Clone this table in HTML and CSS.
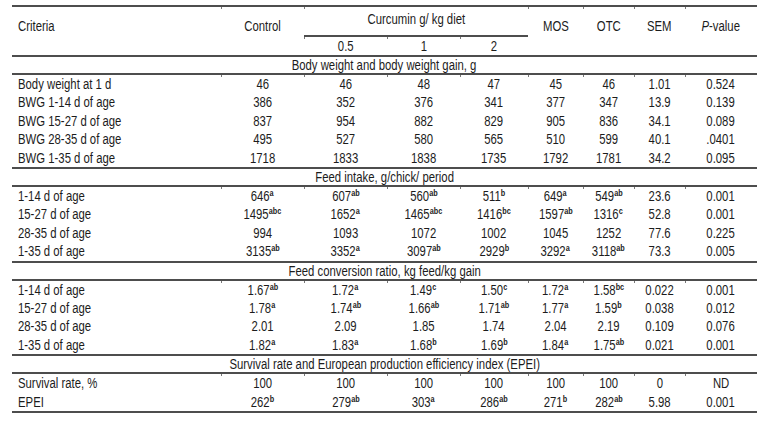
FILE: index.html
```html
<!DOCTYPE html>
<html lang="en">
<head>
<meta charset="utf-8">
<title>Table</title>
<link rel="stylesheet" href="styles.css">
</head>
<body>
<table class="tbl">
  <colgroup>
    <col class="c-crit"><col class="c-ctrl"><col class="c-05"><col class="c-1"><col class="c-2"><col class="c-mos"><col class="c-otc"><col class="c-sem"><col class="c-p">
  </colgroup>
  <thead>
    <tr class="h1">
      <th rowspan="2" class="hcell left"><span class="t">Criteria</span></th>
      <th rowspan="2" class="hcell"><span class="t">Control</span></th>
      <th colspan="3" class="curc"><span class="t">Curcumin g/ kg diet</span></th>
      <th rowspan="2" class="hcell"><span class="t">MOS</span></th>
      <th rowspan="2" class="hcell"><span class="t">OTC</span></th>
      <th rowspan="2" class="hcell"><span class="t">SEM</span></th>
      <th rowspan="2" class="hcell"><span class="t"><i>P</i>-value</span></th>
    </tr>
    <tr class="h2">
      <th><span class="t">0.5</span></th><th><span class="t">1</span></th><th><span class="t">2</span></th>
    </tr>
  </thead>
  <tbody>
    <tr class="sec"><td colspan="9"><span class="t">Body weight and body weight gain, g</span></td></tr>
    <tr class="first"><td class="left"><span class="t">Body weight at 1 d</span></td><td><span class="t">46</span></td><td><span class="t">46</span></td><td><span class="t">48</span></td><td><span class="t">47</span></td><td><span class="t">45</span></td><td><span class="t">46</span></td><td><span class="t">1.01</span></td><td><span class="t">0.524</span></td></tr>
    <tr><td class="left"><span class="t">BWG 1-14 d of age</span></td><td><span class="t">386</span></td><td><span class="t">352</span></td><td><span class="t">376</span></td><td><span class="t">341</span></td><td><span class="t">377</span></td><td><span class="t">347</span></td><td><span class="t">13.9</span></td><td><span class="t">0.139</span></td></tr>
    <tr><td class="left"><span class="t">BWG 15-27 d of age</span></td><td><span class="t">837</span></td><td><span class="t">954</span></td><td><span class="t">882</span></td><td><span class="t">829</span></td><td><span class="t">905</span></td><td><span class="t">836</span></td><td><span class="t">34.1</span></td><td><span class="t">0.089</span></td></tr>
    <tr><td class="left"><span class="t">BWG 28-35 d of age</span></td><td><span class="t">495</span></td><td><span class="t">527</span></td><td><span class="t">580</span></td><td><span class="t">565</span></td><td><span class="t">510</span></td><td><span class="t">599</span></td><td><span class="t">40.1</span></td><td><span class="t">.0401</span></td></tr>
    <tr class="last"><td class="left"><span class="t">BWG 1-35 d of age</span></td><td><span class="t">1718</span></td><td><span class="t">1833</span></td><td><span class="t">1838</span></td><td><span class="t">1735</span></td><td><span class="t">1792</span></td><td><span class="t">1781</span></td><td><span class="t">34.2</span></td><td><span class="t">0.095</span></td></tr>

    <tr class="sec"><td colspan="9"><span class="t">Feed intake, g/chick/ period</span></td></tr>
    <tr class="first"><td class="left"><span class="t">1-14 d of age</span></td><td><span class="t">646<sup>a</sup></span></td><td><span class="t">607<sup>ab</sup></span></td><td><span class="t">560<sup>ab</sup></span></td><td><span class="t">511<sup>b</sup></span></td><td><span class="t">649<sup>a</sup></span></td><td><span class="t">549<sup>ab</sup></span></td><td><span class="t">23.6</span></td><td><span class="t">0.001</span></td></tr>
    <tr><td class="left"><span class="t">15-27 d of age</span></td><td><span class="t">1495<sup>abc</sup></span></td><td><span class="t">1652<sup>a</sup></span></td><td><span class="t">1465<sup>abc</sup></span></td><td><span class="t">1416<sup>bc</sup></span></td><td><span class="t">1597<sup>ab</sup></span></td><td><span class="t">1316<sup>c</sup></span></td><td><span class="t">52.8</span></td><td><span class="t">0.001</span></td></tr>
    <tr><td class="left"><span class="t">28-35 d of age</span></td><td><span class="t">994</span></td><td><span class="t">1093</span></td><td><span class="t">1072</span></td><td><span class="t">1002</span></td><td><span class="t">1045</span></td><td><span class="t">1252</span></td><td><span class="t">77.6</span></td><td><span class="t">0.225</span></td></tr>
    <tr class="last"><td class="left"><span class="t">1-35 d of age</span></td><td><span class="t">3135<sup>ab</sup></span></td><td><span class="t">3352<sup>a</sup></span></td><td><span class="t">3097<sup>ab</sup></span></td><td><span class="t">2929<sup>b</sup></span></td><td><span class="t">3292<sup>a</sup></span></td><td><span class="t">3118<sup>ab</sup></span></td><td><span class="t">73.3</span></td><td><span class="t">0.005</span></td></tr>

    <tr class="sec"><td colspan="9"><span class="t">Feed conversion ratio, kg feed/kg gain</span></td></tr>
    <tr class="first"><td class="left"><span class="t">1-14 d of age</span></td><td><span class="t">1.67<sup>ab</sup></span></td><td><span class="t">1.72<sup>a</sup></span></td><td><span class="t">1.49<sup>c</sup></span></td><td><span class="t">1.50<sup>c</sup></span></td><td><span class="t">1.72<sup>a</sup></span></td><td><span class="t">1.58<sup>bc</sup></span></td><td><span class="t">0.022</span></td><td><span class="t">0.001</span></td></tr>
    <tr><td class="left"><span class="t">15-27 d of age</span></td><td><span class="t">1.78<sup>a</sup></span></td><td><span class="t">1.74<sup>ab</sup></span></td><td><span class="t">1.66<sup>ab</sup></span></td><td><span class="t">1.71<sup>ab</sup></span></td><td><span class="t">1.77<sup>a</sup></span></td><td><span class="t">1.59<sup>b</sup></span></td><td><span class="t">0.038</span></td><td><span class="t">0.012</span></td></tr>
    <tr><td class="left"><span class="t">28-35 d of age</span></td><td><span class="t">2.01</span></td><td><span class="t">2.09</span></td><td><span class="t">1.85</span></td><td><span class="t">1.74</span></td><td><span class="t">2.04</span></td><td><span class="t">2.19</span></td><td><span class="t">0.109</span></td><td><span class="t">0.076</span></td></tr>
    <tr class="last"><td class="left"><span class="t">1-35 d of age</span></td><td><span class="t">1.82<sup>a</sup></span></td><td><span class="t">1.83<sup>a</sup></span></td><td><span class="t">1.68<sup>b</sup></span></td><td><span class="t">1.69<sup>b</sup></span></td><td><span class="t">1.84<sup>a</sup></span></td><td><span class="t">1.75<sup>ab</sup></span></td><td><span class="t">0.021</span></td><td><span class="t">0.001</span></td></tr>

    <tr class="sec"><td colspan="9"><span class="t">Survival rate and European production efficiency index (EPEI)</span></td></tr>
    <tr class="first"><td class="left"><span class="t">Survival rate, %</span></td><td><span class="t">100</span></td><td><span class="t">100</span></td><td><span class="t">100</span></td><td><span class="t">100</span></td><td><span class="t">100</span></td><td><span class="t">100</span></td><td><span class="t">0</span></td><td><span class="t">ND</span></td></tr>
    <tr class="last"><td class="left"><span class="t">EPEI</span></td><td><span class="t">262<sup>b</sup></span></td><td><span class="t">279<sup>ab</sup></span></td><td><span class="t">303<sup>a</sup></span></td><td><span class="t">286<sup>ab</sup></span></td><td><span class="t">271<sup>b</sup></span></td><td><span class="t">282<sup>ab</sup></span></td><td><span class="t">5.98</span></td><td><span class="t">0.001</span></td></tr>
  </tbody>
</table>
</body>
</html>
```

FILE: styles.css
```css
html, body {
  margin: 0;
  background: #ffffff;
}
body {
  padding: 5px 6px 0 12px;
  font-family: "Liberation Sans", Arial, sans-serif;
  font-size: 14px;
  color: #1c1c1c;
}
.tbl {
  width: 745px;
  table-layout: fixed;
  border-collapse: separate;
  border-spacing: 0;
}
.c-crit { width: 209px; }
.c-ctrl { width: 83px; }
.c-05 { width: 83px; }
.c-1 { width: 73px; }
.c-2 { width: 68px; }
.c-mos { width: 55px; }
.c-otc { width: 51px; }
.c-sem { width: 51px; }
.c-p { width: 72px; }

th, td {
  padding: 0;
  font-weight: normal;
  text-align: center;
  white-space: nowrap;
}
/* condensed (Arial Narrow-like) text */
.t {
  display: inline-block;
  transform: scaleX(0.81);
  transform-origin: 50% 50%;
}
.left {
  text-align: left;
  padding-left: 6px;
}
.left .t {
  transform-origin: 0 50%;
}
.hcell {
  vertical-align: top;
  padding-top: 11px;
  line-height: 17px;
  border-top: 2px solid #4d4d4d;
  border-bottom: 2px solid #4d4d4d;
}
.curc {
  vertical-align: top;
  padding-top: 4px;
  padding-bottom: 7px;
  line-height: 17px;
  border-top: 2px solid #4d4d4d;
  border-bottom: 2px solid #4d4d4d;
}
.h2 th {
  line-height: 18px;
  border-bottom: 2px solid #4d4d4d;
}
tbody td {
  line-height: 18.4px;
}
.sec td {
  line-height: 16px;
  border-bottom: 2px solid #4d4d4d;
}
.last td {
  border-bottom: 2px solid #4d4d4d;
}
/* small cell-boundary ticks under the rules */
.h1 th + th,
.h2 th,
.first td + td {
  background: linear-gradient(#777, #777) left top / 1px 2px no-repeat;
}
sup {
  font-size: 9px;
  font-weight: bold;
  line-height: 0;
  vertical-align: 5px;
}
```
